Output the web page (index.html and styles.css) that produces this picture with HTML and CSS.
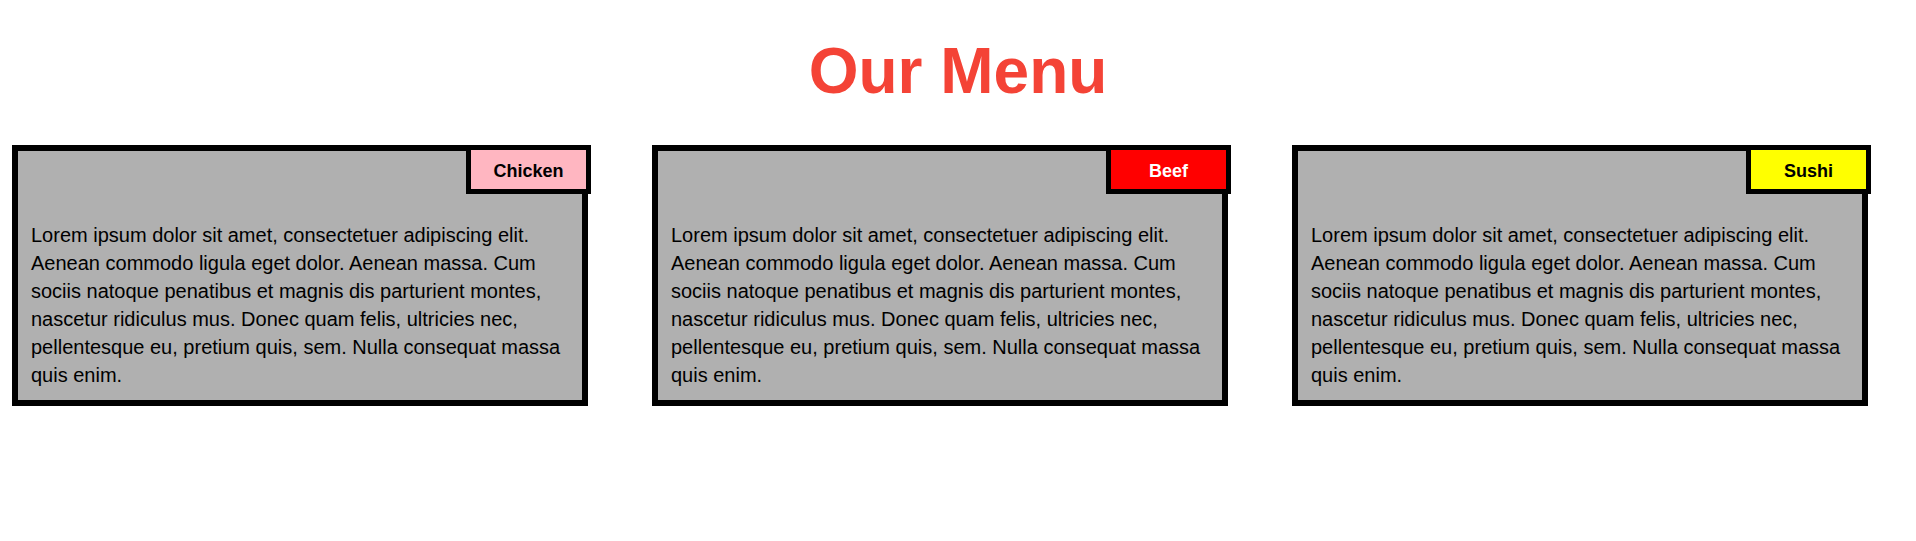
FILE: index.html
```html
<!DOCTYPE html>
<html lang="en">
<head>
<meta charset="utf-8">
<title>Our Menu</title>
<link rel="stylesheet" href="styles.css">
</head>
<body>
  <h1 class="title">Our Menu</h1>
  <div class="menu">
    <div class="card">
      <span class="badge badge-chicken">Chicken</span>
      <p class="card-text">Lorem ipsum dolor sit amet, consectetuer adipiscing elit. Aenean commodo ligula eget dolor. Aenean massa. Cum sociis natoque penatibus et magnis dis parturient montes, nascetur ridiculus mus. Donec quam felis, ultricies nec, pellentesque eu, pretium quis, sem. Nulla consequat massa quis enim.</p>
    </div>
    <div class="card">
      <span class="badge badge-beef">Beef</span>
      <p class="card-text">Lorem ipsum dolor sit amet, consectetuer adipiscing elit. Aenean commodo ligula eget dolor. Aenean massa. Cum sociis natoque penatibus et magnis dis parturient montes, nascetur ridiculus mus. Donec quam felis, ultricies nec, pellentesque eu, pretium quis, sem. Nulla consequat massa quis enim.</p>
    </div>
    <div class="card">
      <span class="badge badge-sushi">Sushi</span>
      <p class="card-text">Lorem ipsum dolor sit amet, consectetuer adipiscing elit. Aenean commodo ligula eget dolor. Aenean massa. Cum sociis natoque penatibus et magnis dis parturient montes, nascetur ridiculus mus. Donec quam felis, ultricies nec, pellentesque eu, pretium quis, sem. Nulla consequat massa quis enim.</p>
    </div>
  </div>
</body>
</html>
```
FILE: styles.css
```css
* { box-sizing: border-box; }

body {
  margin: 0;
  background: #ffffff;
  font-family: "Comic Sans MS", "Liberation Sans", Arial, sans-serif;
  color: #000;
}

.title {
  margin: 34px 0 0;
  font-size: 64px;
  line-height: 74px;
  font-weight: bold;
  text-align: center;
  color: #f44336;
}

.menu {
  display: flex;
  gap: 64px;
  padding-left: 12px;
  margin-top: 37px;
}

.card {
  position: relative;
  width: 576px;
  background: #b0b0b0;
  border: 6px solid #000;
  padding: 70px 13px 11px;
}

.card-text {
  margin: 0;
  font-size: 20px;
  line-height: 28px;
}

.badge {
  position: absolute;
  top: -6px;
  right: -9px;
  width: 125px;
  height: 49px;
  border: 5px solid #000;
  padding-top: 3px;
  display: flex;
  align-items: center;
  justify-content: center;
  font-size: 18px;
  font-weight: bold;
}

.badge-chicken { background: #ffb6c1; color: #000; }
.badge-beef { background: #ff0000; color: #fff; }
.badge-sushi { background: #ffff00; color: #000; }
```
